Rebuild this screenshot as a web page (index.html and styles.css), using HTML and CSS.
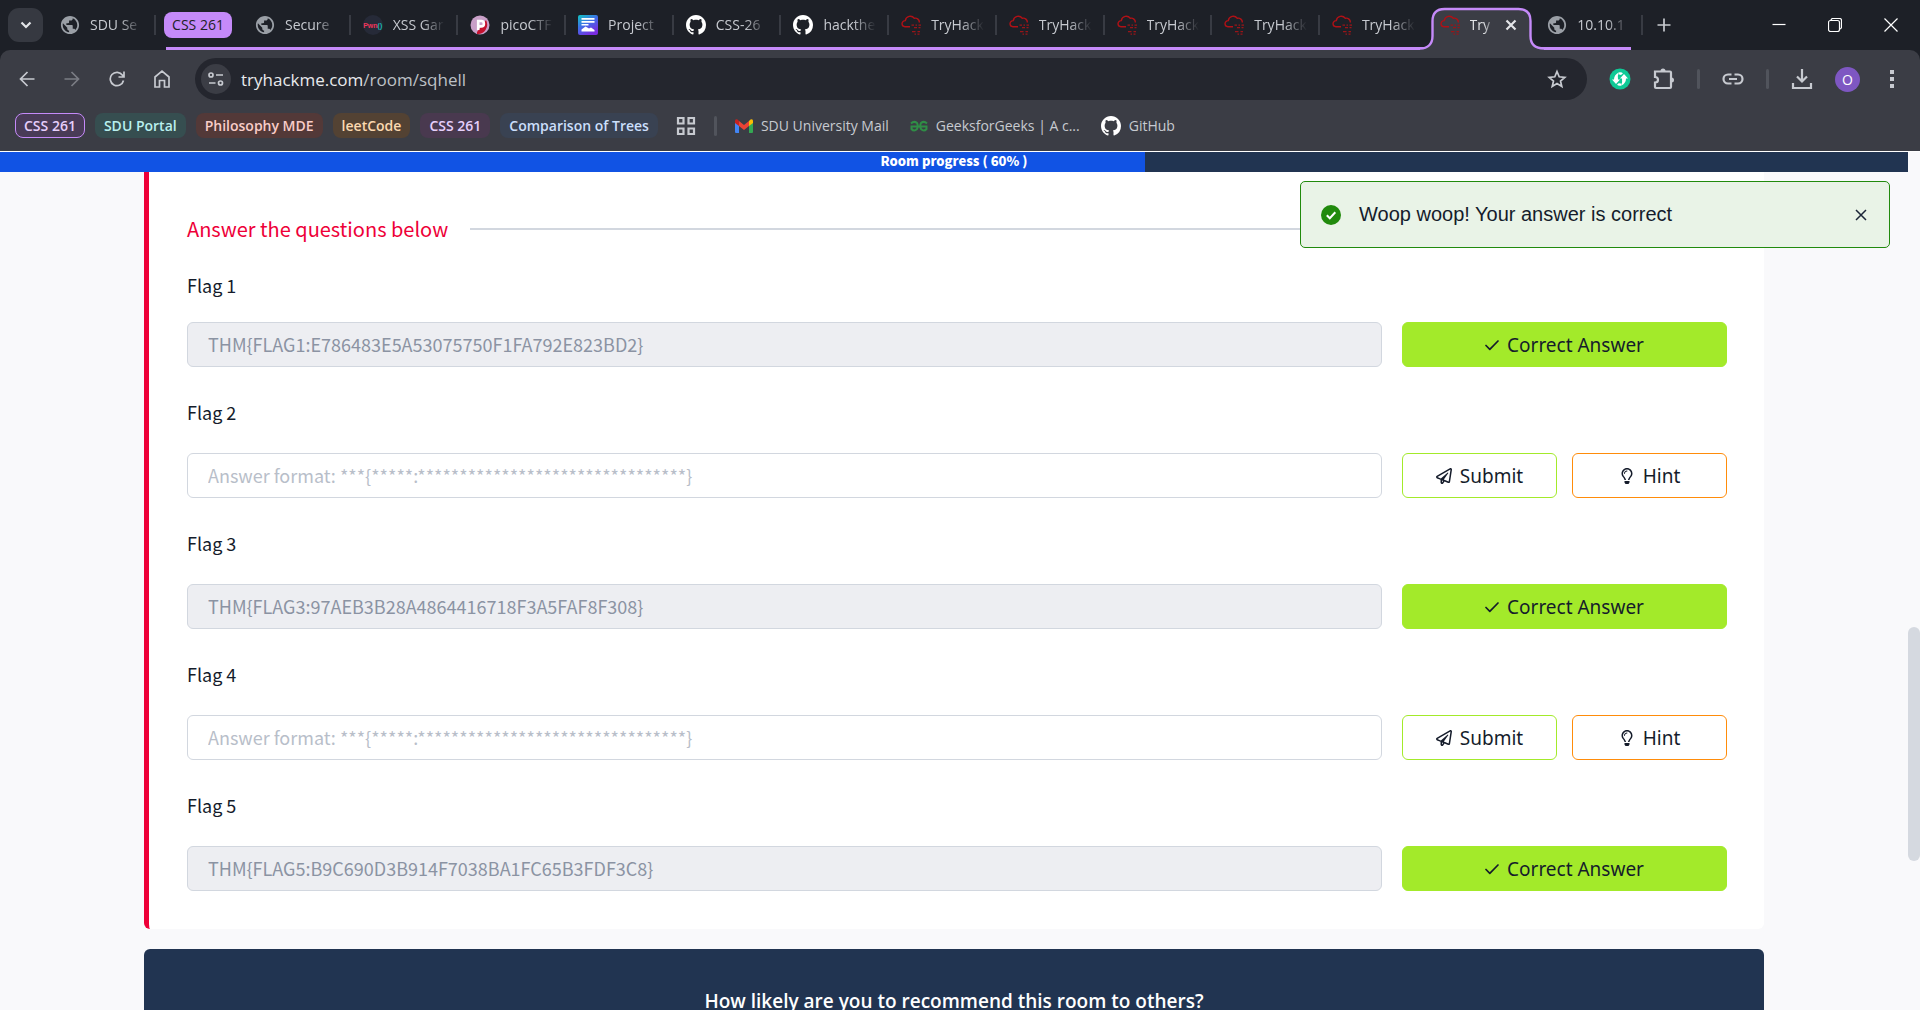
FILE: index.html
```html
<!DOCTYPE html>
<html lang="en">
<head>
<meta charset="utf-8">
<title>TryHackMe | SQHell</title>
<link rel="stylesheet" href="styles.css">
</head>
<body>
<svg class="defs" aria-hidden="true">
  <symbol id="globe" viewBox="1 1 22 22"><path fill="#9a9fa6" d="M12 2C6.48 2 2 6.48 2 12s4.48 10 10 10 10-4.480 10-10S17.520 2 12 2zm-1 17.930c-3.950-.490-7-3.850-7-7.930 0-.620.080-1.210.210-1.790L9 15v1c0 1.100.900 2 2 2v1.930zm6.900-2.540c-.260-.810-1-1.390-1.900-1.390h-1v-3c0-.550-.450-1-1-1H8v-2h2c.550 0 1-.450 1-1V7h2c1.100 0 2-.900 2-2v-.410c2.930 1.190 5 4.060 5 7.410 0 2.080-.800 3.970-2.100 5.390z"/></symbol>
  <symbol id="github" viewBox="0 0 16 16"><path fill="#fff" d="M8 0C3.58 0 0 3.58 0 8c0 3.54 2.29 6.53 5.47 7.59.4.07.55-.17.55-.38 0-.19-.01-.82-.01-1.49-2.01.37-2.53-.49-2.69-.94-.09-.23-.48-.94-.82-1.13-.28-.15-.68-.52-.01-.53.63-.01 1.080.58 1.230.82.72 1.210 1.870.87 2.330.66.07-.52.28-.87.51-1.070-1.780-.2-3.640-.89-3.640-3.950 0-.87.31-1.590.82-2.150-.08-.2-.36-1.020.08-2.120 0 0 .67-.21 2.200.82.64-.18 1.320-.27 2-.27s1.360.09 2 .27c1.530-1.040 2.200-.82 2.200-.82.44 1.100.16 1.920.08 2.120.51.56.82 1.270.82 2.150 0 3.070-1.870 3.750-3.650 3.950.29.25.54.73.54 1.480 0 1.070-.01 1.930-.01 2.200 0 .21.15.46.55.38A8.010 8.010 0 0 0 16 8c0-4.420-3.580-8-8-8z"/></symbol>
  <symbol id="thm" viewBox="0 0 20 20"><path fill="none" stroke="#b01116" stroke-width="1.4" d="M9 11.800H4a3.100 3.100 0 0 1 .3-6.200A5 5 0 0 1 13.300 3.300a4 4 0 0 1 5 4.200"/><g fill="#9a1418"><path d="M10.500 9.500h2.500v1.300h-2.500zM14.500 9.500H16v1.300h-1.500zM17.500 9.500H20v1.300h-2.500zM13 12h3v1.300h-3zM17.500 12h2v1.300h-2zM11 16h3.500v1.300H11zM16.500 16H19v1.300h-2.500zM13.500 18.500H15v1.300h-1.500zM16.500 18.500h2v1.300h-2z"/></g></symbol>
  <symbol id="check" viewBox="0 0 14 12"><path fill="none" stroke="currentColor" stroke-width="1.700" stroke-linecap="round" stroke-linejoin="round" d="M1 6.500l3.800 3.800L13 2"/></symbol>
  <symbol id="plane" viewBox="0 0 512 512"><path fill="currentColor" d="M440 6.500L24 246.400c-34.400 19.900-31.100 70.800 5.700 85.900L144 379.600V464c0 46.400 59.200 65.500 86.600 28.600l43.800-59.100 111.900 46.200c5.900 2.400 12.100 3.600 18.300 3.600 8.200 0 16.300-2.100 23.600-6.200 12.800-7.200 21.600-20 23.900-34.500l59.400-387.200c6.100-40.100-36.900-68.800-71.500-48.900zM192 464v-64.600l36.600 15.100L192 464zm212.600-28.700l-153.800-63.500L391 169.500c10.700-15.500-9.500-33.500-23.700-21.200L155.800 332.600 48 288 464 48l-59.400 387.300z"/></symbol>
  <symbol id="bulb" viewBox="0 0 352 512"><path fill="currentColor" d="M176 80c-52.940 0-96 43.060-96 96 0 8.840 7.160 16 16 16s16-7.160 16-16c0-35.300 28.720-64 64-64 8.840 0 16-7.160 16-16s-7.160-16-16-16zM96.060 459.170c0 3.150.93 6.220 2.680 8.840l24.510 36.840c2.970 4.460 7.970 7.140 13.320 7.140h78.850c5.360 0 10.360-2.680 13.320-7.140l24.510-36.840c1.740-2.620 2.670-5.700 2.680-8.840l.05-43.180H96.020l.04 43.180zM176 0C73.720 0 0 82.970 0 176c0 44.370 16.450 84.850 43.560 115.780 16.640 18.990 42.740 58.800 52.420 92.160v.06h48v-.12c-.01-4.770-.72-9.510-2.150-14.070-5.590-17.810-22.820-64.770-62.170-109.670-20.540-23.430-31.520-53.150-31.610-84.140-.2-73.640 59.670-128 127.950-128 70.580 0 128 57.420 128 128 0 30.970-11.240 60.850-31.650 84.140-39.110 44.610-56.420 91.470-62.100 109.460a47.507 47.507 0 0 0-2.220 14.300v.1h48v-.05c9.680-33.370 35.780-73.180 52.420-92.160C335.550 260.850 352 220.370 352 176 352 78.800 273.200 0 176 0z"/></symbol>
</svg>

<header class="browser">
  <div class="strip">
    <button class="tab-search" aria-label="Search tabs"><svg width="12" height="8" viewBox="0 0 12 8"><path class="bold-line" d="M1.500 1.500L6 6l4.500-4.500"/></svg></button>
    <div class="tabs">
      <div class="tab single"><svg class="fav"><use href="#globe"/></svg><span class="name">SDU Se</span></div>
      <div class="group">
        <span class="group-name">CSS 261</span>
        <div class="tab"><svg class="fav"><use href="#globe"/></svg><span class="name">Secure</span></div>
        <div class="tab"><span class="fav pwn"><span>Pwn<b>()</b></span></span><span class="name">XSS Gar</span></div>
        <div class="tab"><svg class="fav" viewBox="0 0 20 20"><circle cx="10" cy="10" r="9.500" fill="#c9a0c8"/><path d="M7 17L16 5a9.500 9.500 0 0 1-9 14z" fill="#c4122f"/><path d="M8.200 15V6h3a2.700 2.700 0 0 1 0 5.400H8.200" fill="none" stroke="#fff" stroke-width="2.600"/></svg><span class="name">picoCTF</span></div>
        <div class="tab"><svg class="fav" viewBox="0 0 20 20"><defs><linearGradient id="pg" x1="0" y1="0" x2=".6" y2="1"><stop offset="0" stop-color="#10c6c0"/><stop offset=".5" stop-color="#3f6de8"/><stop offset="1" stop-color="#7a2ce0"/></linearGradient></defs><rect width="20" height="20" rx="2" fill="url(#pg)"/><path d="M3.500 3h13v1.800h-13zM3.500 6h13v1.800h-13zM3.500 9h7v1.500h-7zM3.500 16.500v-2l4-3 3.500 2 2-1 3.500 2.500v1.500z" fill="#fff"/></svg><span class="name">Project</span></div>
        <div class="tab"><svg class="fav"><use href="#github"/></svg><span class="name">CSS-26</span></div>
        <div class="tab"><svg class="fav"><use href="#github"/></svg><span class="name">hackthe</span></div>
        <div class="tab"><svg class="fav"><use href="#thm"/></svg><span class="name">TryHack</span></div>
        <div class="tab"><svg class="fav"><use href="#thm"/></svg><span class="name">TryHack</span></div>
        <div class="tab"><svg class="fav"><use href="#thm"/></svg><span class="name">TryHack</span></div>
        <div class="tab"><svg class="fav"><use href="#thm"/></svg><span class="name">TryHack</span></div>
        <div class="tab last"><svg class="fav"><use href="#thm"/></svg><span class="name">TryHack</span></div>
        <div class="tab active">
          <svg class="outline" width="124" height="50" viewBox="0 0 124 50"><path d="M0 50V48.500C8 48.500 12.500 44 12.500 36V21Q12.500 9 24.500 9H98.500Q110.500 9 110.500 21V36C110.500 44 115 48.500 124 48.500V50z" fill="#3b3d45"/><path d="M0 48.500C8 48.500 12.500 44 12.500 36V21Q12.500 9 24.500 9H98.500Q110.500 9 110.500 21V36C110.500 44 115 48.500 124 48.500" fill="none" stroke="#c58af9" stroke-width="2.400"/></svg>
          <svg class="fav"><use href="#thm"/></svg><span class="name">Try</span>
          <button class="plain close-tab" aria-label="Close tab"><svg width="12" height="12" viewBox="0 0 12 12"><path class="bold-line" d="M1.500 1.500l9 9M10.500 1.500l-9 9"/></svg></button>
        </div>
        <div class="tab"><svg class="fav"><use href="#globe"/></svg><span class="name">10.10.1</span></div>
      </div>
    </div>
    <div class="window">
      <button class="plain" aria-label="New tab"><svg width="14" height="14" viewBox="0 0 14 14"><path class="line" d="M7 .5v13M.5 7h13"/></svg></button>
      <button class="plain push" aria-label="Minimize"><svg width="14" height="14" viewBox="0 0 14 14"><path class="thin" d="M.5 6.500h13"/></svg></button>
      <button class="plain" aria-label="Restore"><svg width="14" height="14" viewBox="0 0 14 14"><path class="thin" d="M3 2.500V2Q3.500.5 5 .5h6.500q2 0 2 2V9q0 1.500-1.500 2h-.5"/><rect class="thin" x=".5" y="2.500" width="11" height="11" rx="2"/></svg></button>
      <button class="plain" aria-label="Close"><svg width="14" height="14" viewBox="0 0 14 14"><path class="thin" d="M.5.5l13 13M13.500.5l-13 13"/></svg></button>
    </div>
  </div>

  <div class="toolbar">
    <nav class="nav-buttons">
      <button class="plain" aria-label="Back"><svg width="16" height="16" viewBox="0 0 16 16"><path class="line" d="M15.500 8H2M8.500 1L1.500 8l7 7"/></svg></button>
      <button class="plain dim" aria-label="Forward"><svg width="16" height="16" viewBox="0 0 16 16"><path class="line" d="M.5 8H14M7.500 1l7 7-7 7"/></svg></button>
      <button class="plain" aria-label="Reload"><svg width="16" height="16" viewBox="0 0 16 16"><path class="line" d="M14.500 9.500A6.700 6.700 0 1 1 13.500 4.200l1 1.300M15 .5v5.500H9.500"/></svg></button>
      <button class="plain" aria-label="Home"><svg width="16" height="18" viewBox="0 0 16 18"><path class="line" d="M1 7l7-5.800L15 7v10h-4.500v-6.500h-5V17H1z"/></svg></button>
    </nav>
    <div class="omnibox">
      <button class="site-info" aria-label="Site information"><svg width="16" height="14" viewBox="0 0 16 14"><path class="line" d="M8 3h7M1 11h6.500"/><circle class="line" cx="3" cy="3" r="2"/><circle class="line" cx="12.500" cy="11" r="2"/></svg></button>
      <span class="url">tryhackme.com<span class="path">/room/sqhell</span></span>
      <button class="plain" aria-label="Bookmark this page"><svg width="20" height="20" viewBox="0 0 20 20"><path class="line" d="M10 2.500l2.200 5.300 5.600.5-4.300 3.700 1.300 5.500L10 14.600l-4.800 2.900L6.500 12 2.200 8.300l5.600-.5z"/></svg></button>
    </div>
    <div class="extensions">
      <svg width="22" height="22" viewBox="0 0 22 22"><circle cx="11" cy="11" r="10.500" fill="#0fc996"/><path d="M3 11.500h2Q5 7 9.500 4.500 8.500 7.500 9 11.500h2L7 16zM19 10.500h-2q0 4.500-4.500 7 1-3 .5-7h-2L15 6z" fill="#fff"/><path d="M9.500 4.500q3-.7 4.500.8L12 7q-1-.8-2.500-.5zM12.500 17.500q-3 .7-4.500-.8L10 15q1 .8 2.500.5z" fill="#fff"/></svg>
      <svg width="22" height="22" viewBox="0 0 22 22"><path class="line thick" d="M2 3.500h15q1 0 1 1v14.500q0 1-1 1H3q-1 0-1-1v-4.500c4 0 4-5.500 0-5.500z"/><path fill="#c7cad0" d="M7.500 3a2.500 2.500 0 0 1 5 0zM18.500 9.500a2.500 2.500 0 0 1 0 5z"/></svg>
      <i class="rule"></i>
      <svg width="22" height="12" viewBox="0 0 22 12"><path class="line thick" d="M9.500 1.500H6a4.500 4.500 0 0 0 0 9h3.500M12.500 1.500H16a4.500 4.500 0 0 1 0 9h-3.500M7 6h8"/></svg>
      <i class="rule"></i>
      <svg width="22" height="22" viewBox="0 0 22 22"><path class="bold-line soft" d="M11 1v12M6 8.500l5 5 5-5M2 15v5h18v-5"/></svg>
      <span class="avatar">O</span>
      <svg class="push" width="6" height="20" viewBox="0 0 6 20"><path fill="#c7cad0" d="M1 1h4v4H1zM1 8h4v4H1zM1 15h4v4H1z"/></svg>
    </div>
  </div>

  <nav class="bookmarks">
    <a class="chip open" href="#">CSS 261</a>
    <a class="chip teal" href="#">SDU Portal</a>
    <a class="chip red" href="#">Philosophy MDE</a>
    <a class="chip orange" href="#">leetCode</a>
    <a class="chip purple" href="#">CSS 261</a>
    <a class="chip blue" href="#">Comparison of Trees</a>
    <svg class="grid" width="20" height="20" viewBox="0 0 20 20"><path class="line thick" d="M2 2h5.500v5.500H2zM12.500 2H18v5.500h-5.500zM2 12.500h5.500V18H2zM12.500 12.500H18V18h-5.500z"/></svg>
    <i class="rule"></i>
    <a class="mark" href="#"><svg width="18" height="14" viewBox="0 0 18 14"><path fill="#4285f4" d="M0 3l4 3v8H1q-1 0-1-1z"/><path fill="#34a853" d="M14 6l4-3v10q0 1-1 1h-3z"/><path fill="#fbbc04" d="M14 2l1.500-1.500Q18-.5 18 2v2l-4 3z"/><path fill="#ea4335" d="M4 2l5 4 5-4v5l-5 4-5-4z"/><path fill="#c5221f" d="M0 2Q0-.5 2.500.5L4 2v5L0 4z"/></svg>SDU University Mail</a>
    <a class="mark" href="#"><svg width="18" height="12" viewBox="0 0 18 12"><path fill="none" stroke="#2f8d46" stroke-width="2" d="M1 3.500Q4 .5 7 3q1.500 3 0 6Q4 12 1.500 9V6.500h15V9q-2.500 3-5.500 0-1.500-3 0-6 3-2.500 6 .5"/></svg>GeeksforGeeks | A c...</a>
    <a class="mark" href="#"><svg width="20" height="20"><use href="#github"/></svg>GitHub</a>
  </nav>
</header>

<div class="viewport">
  <main class="page">
    <div class="progress"><div class="progress-fill" style="width:60%"></div><span class="progress-text">Room progress ( 60% )</span></div>
    <section class="task">
      <h2 class="heading">Answer the questions below</h2>
      <div class="question first">
        <label for="f1">Flag 1</label>
        <div class="answer"><input id="f1" value="THM{FLAG1:E786483E5A53075750F1FA792E823BD2}" disabled><button class="btn done"><svg width="14" height="12"><use href="#check"/></svg>Correct Answer</button></div>
      </div>
      <div class="question">
        <label for="f2">Flag 2</label>
        <div class="answer"><input id="f2" placeholder="Answer format: ***{*****:********************************}"><button class="btn submit"><svg width="16" height="16"><use href="#plane"/></svg>Submit</button><button class="btn hint"><svg width="16" height="16"><use href="#bulb"/></svg>Hint</button></div>
      </div>
      <div class="question">
        <label for="f3">Flag 3</label>
        <div class="answer"><input id="f3" value="THM{FLAG3:97AEB3B28A4864416718F3A5FAF8F308}" disabled><button class="btn done"><svg width="14" height="12"><use href="#check"/></svg>Correct Answer</button></div>
      </div>
      <div class="question">
        <label for="f4">Flag 4</label>
        <div class="answer"><input id="f4" placeholder="Answer format: ***{*****:********************************}"><button class="btn submit"><svg width="16" height="16"><use href="#plane"/></svg>Submit</button><button class="btn hint"><svg width="16" height="16"><use href="#bulb"/></svg>Hint</button></div>
      </div>
      <div class="question">
        <label for="f5">Flag 5</label>
        <div class="answer"><input id="f5" value="THM{FLAG5:B9C690D3B914F7038BA1FC65B3FDF3C8}" disabled><button class="btn done"><svg width="14" height="12"><use href="#check"/></svg>Correct Answer</button></div>
      </div>
    </section>
    <section class="survey"><h3>How likely are you to recommend this room to others?</h3></section>
  </main>
  <div class="scrollbar"><div class="thumb"></div></div>
  <div class="toast" role="status">
    <svg width="20" height="20" viewBox="0 0 20 20"><circle cx="10" cy="10" r="10" fill="#218a0d"/><path d="M5.800 10.300l3 3 5.500-6" fill="none" stroke="#fff" stroke-width="2"/></svg>
    <span class="message">Woop woop! Your answer is correct</span>
    <button class="plain" aria-label="Dismiss"><svg width="12" height="12" viewBox="0 0 12 12"><path d="M1 1l10 10M11 1L1 11" fill="none" stroke="#1c2538" stroke-width="1.500"/></svg></button>
  </div>
</div>
</body>
</html>
```
FILE: styles.css
```css
* { box-sizing: border-box; }
body {
  margin: 0;
  height: 100vh;
  display: flex;
  flex-direction: column;
  overflow: hidden;
  background: #f9f9fb;
  color: #151c2b;
  font-family: "Noto Sans CJK SC", "Noto Sans", sans-serif;
}
button { font: inherit; color: inherit; margin: 0; }
svg { flex: none; display: block; }
.defs { position: absolute; width: 0; height: 0; }
.plain { display: flex; align-items: center; justify-content: center; padding: 0; border: 0; background: none; }
.line, .bold-line, .thin { fill: none; stroke: #c7cad0; stroke-width: 1.7; }
.bold-line { stroke: #e3e5e8; stroke-width: 2.2; }
.thin { stroke: #fff; stroke-width: 1.2; }
.thick { stroke-width: 2.2; }
.soft { stroke: #c7cad0; }
.rule { width: 3px; height: 20px; border-radius: 2px; background: #51545c; }
.push { margin-left: auto; }

/* browser frame */
.browser { flex: none; background: #1d2027; color: #c7cad0; font-family: "Open Sans", "Noto Sans", sans-serif; font-size: 14px; }
.strip { display: flex; height: 50px; }
.tab-search { width: 35px; height: 34px; margin: 8px 5px 0 8px; padding: 0; border: 0; border-radius: 11px; background: #363941; display: flex; align-items: center; justify-content: center; }
.tabs { flex: 1; display: flex; min-width: 0; }
.tab { position: relative; flex: 1 1 0; min-width: 0; display: flex; align-items: center; gap: 10px; padding: 0 12px; }
.tab.single { flex: none; width: 108px; }
.tab::after { content: ""; position: absolute; right: 0; top: 15px; width: 2px; height: 20px; background: #383b43; }
.tab.last::after, .tab.active::after { display: none; }
.group { position: relative; flex: 1; display: flex; min-width: 0; }
.group::after { content: ""; position: absolute; left: 10px; right: 12px; bottom: 0; height: 3px; background: #c58af9; }
.group-name { flex: none; align-self: center; margin: 0 11px 0 8px; width: 68px; height: 26px; line-height: 25px; text-align: center; border-radius: 8px; background: #c58af9; color: #202124; }
.fav { width: 20px; height: 20px; flex: none; }
.pwn { display: flex; align-items: center; justify-content: center; border-radius: 50%; background: #262a38; color: #f0365a; font-family: "Liberation Sans", sans-serif; font-size: 7px; font-weight: 700; }
.pwn b { color: #18b9b4; }
.name { flex: 1; white-space: nowrap; line-height: 24px; -webkit-mask-image: linear-gradient(90deg, #000 55%, transparent 98%); mask-image: linear-gradient(90deg, #000 55%, transparent 98%); }
.active { z-index: 1; color: #e3e5e8; }
.active > * { position: relative; }
.active .outline { position: absolute; left: -8px; top: 0; }
.close-tab { margin-right: 6px; }
.window { flex: none; width: 277px; display: flex; align-items: center; padding: 0 22px 0 14px; gap: 42px; }

.toolbar { display: flex; align-items: center; height: 58px; padding: 0 25px 0 19px; background: #3b3d45; border-radius: 10px 10px 0 0; }
.nav-buttons { display: flex; align-items: center; gap: 29px; width: 176px; }
.dim { opacity: .45; }
.omnibox { flex: 1; display: flex; align-items: center; height: 42px; padding: 0 20px 0 6px; border-radius: 21px; background: #24262e; }
.site-info { display: flex; align-items: center; justify-content: center; width: 30px; height: 30px; padding: 0; border: 0; border-radius: 50%; background: #3b3d45; }
.url { flex: 1; padding-left: 10px; font-size: 17px; color: #e8eaed; }
.path { color: #bdc1c6; }
.extensions { display: flex; align-items: center; gap: 22px; width: 308px; padding-left: 22px; }
.avatar { width: 25px; height: 25px; border-radius: 50%; background: #7e57c2; color: #fff; line-height: 25px; text-align: center; font-size: 14px; }

.bookmarks { display: flex; align-items: center; gap: 10px; height: 43px; padding: 0 15px 8px; background: #3b3d45; }
.chip { height: 25px; padding: 0 9px; border-radius: 8px; line-height: 25px; font-weight: 600; text-decoration: none; white-space: nowrap; }
.open { padding: 0 8px; background: #493b57; color: #e6cffb; border: 1px solid #c58af9; line-height: 23px; }
.purple { background: #49394f; color: #e6cffb; }
.teal { background: #364e50; color: #b9f0ee; }
.red { background: #533938; color: #f9cdc8; }
.orange { background: #534233; color: #fbd9b0; }
.blue { background: #394252; color: #cbdffb; }
.grid { margin: 0 8px; }
.mark { display: flex; align-items: center; gap: 8px; margin: 0 3px 0 8px; color: #c7cad0; text-decoration: none; white-space: nowrap; }

/* page */
.viewport { position: relative; flex: 1; min-height: 0; display: flex; border-top: 1px solid #fff; }
.page { flex: 1; min-width: 0; overflow: hidden; }
.progress { position: relative; height: 20px; background: #213451; }
.progress-fill { height: 100%; background: #1153e4; }
.progress-text { position: absolute; inset: 0; text-align: center; line-height: 18px; font-size: 13px; font-weight: 900; color: #fff; }
.task { margin: 0 144px; padding: 40px 37px 38px 38px; background: #fff; border-left: 5px solid #ee0038; border-radius: 0 0 6px 6px; }
.heading { display: flex; align-items: center; gap: 22px; margin: 0; font-size: 20px; line-height: 34px; font-weight: 400; color: #ee0038; }
.heading::after { content: ""; flex: 1; height: 2px; background: #d2d7df; }
.question { padding-top: 31px; }
.question.first { padding-top: 25px; }
label { display: block; font-size: 18px; line-height: 28px; margin-bottom: 27px; }
.first label { margin-bottom: 23px; }
.answer { display: grid; grid-template-columns: 1fr 155px 155px; gap: 15px; height: 45px; }
.answer input { min-width: 0; margin-right: 5px; padding: 0 20px 2px; border: 1px solid #d2d7df; border-radius: 6px; background: #fff; font: inherit; font-size: 18px; color: #151c2b; }
.answer input:disabled { background: #edeef2; color: #8b93a3; }
.answer input::placeholder { color: #b8bec9; opacity: 1; }
.btn { display: flex; align-items: center; justify-content: center; gap: 8px; padding: 0; border: 1px solid; border-radius: 6px; background: #fff; font-family: "Noto Sans", sans-serif; font-size: 19px; color: #151c2b; }
.done { grid-column: span 2; background: #a3ea2a; border-color: #a3ea2a; }
.submit { border-color: #a3ea2a; }
.hint { border-color: #ff8c0a; }
.survey { margin: 20px 144px 0; padding: 38px; height: 200px; border-radius: 6px; background: #213451; color: #fff; text-align: center; }
.survey h3 { margin: 0; font-family: "Open Sans", sans-serif; font-size: 19px; line-height: 28px; font-weight: 600; }
.scrollbar { flex: none; width: 12px; padding-top: 475px; }
.thumb { height: 234px; border-radius: 6px; background: #d5d9e0; }
.toast { position: absolute; top: 29px; right: 30px; width: 590px; height: 67px; display: flex; align-items: center; padding: 0 22px 0 20px; border: 1px solid #218a0d; border-radius: 5px; background: #e9f3e7; font-family: "Liberation Sans", sans-serif; font-size: 20px; }
.message { flex: 1; padding-left: 18px; }
```
